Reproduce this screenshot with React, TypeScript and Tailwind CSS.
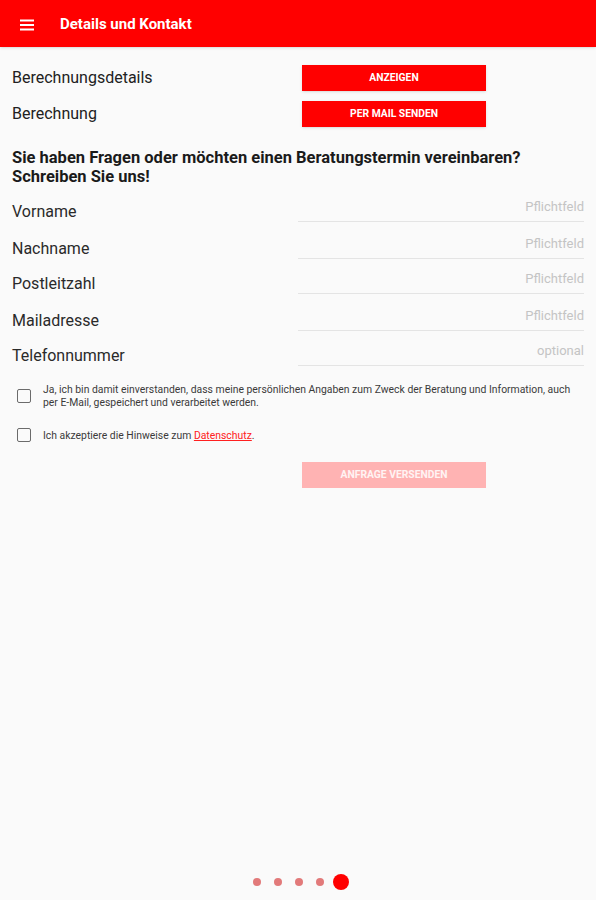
import React from 'react';

const fields = [
  { label: 'Vorname', hint: 'Pflichtfeld' },
  { label: 'Nachname', hint: 'Pflichtfeld' },
  { label: 'Postleitzahl', hint: 'Pflichtfeld' },
  { label: 'Mailadresse', hint: 'Pflichtfeld' },
  { label: 'Telefonnummer', hint: 'optional' },
];

const App: React.FC = () => {
  return (
    <div className="min-h-[900px] h-[900px] bg-[#fafafa] flex flex-col font-['Roboto',sans-serif] text-[#212121]">
      <header className="h-[47px] bg-[#ff0000] flex items-center shrink-0 pt-[2px] shadow-sm">
        <svg width="14" height="12" viewBox="0 0 14 12" className="ml-[20px]">
          <rect x="0" y="0.5" width="14" height="2" fill="#fff" />
          <rect x="0" y="5" width="14" height="2" fill="#fff" />
          <rect x="0" y="9.5" width="14" height="2" fill="#fff" />
        </svg>
        <h1 className="ml-[26px] text-white text-[15px] font-bold">Details und Kontakt</h1>
      </header>

      <main className="px-3 flex-1">
        <div className="mt-[18px] flex flex-col gap-[10px]">
          <div className="flex items-center h-[26px]">
            <span className="w-[290px] text-[16px]">Berechnungsdetails</span>
            <button className="w-[184px] h-[26px] bg-[#ff0000] text-white text-[10.3px] font-bold shadow-sm">ANZEIGEN</button>
          </div>
          <div className="flex items-center h-[26px]">
            <span className="w-[290px] text-[16px]">Berechnung</span>
            <button className="w-[184px] h-[26px] bg-[#ff0000] text-white text-[10.3px] font-bold shadow-sm">PER MAIL SENDEN</button>
          </div>
        </div>

        <h2 className="mt-[21px] text-[16.5px] leading-[19px] font-bold text-[#1a1a1a]">
          Sie haben Fragen oder möchten einen Beratungstermin vereinbaren?
          <br />
          Schreiben Sie uns!
        </h2>

        <div className="flex flex-col">
          {fields.map((f, i) => (
            <div key={f.label} className={`flex ${i === 0 ? 'h-[36px]' : i === 2 ? 'h-[35px]' : i === 3 ? 'h-[37px]' : i === 4 ? 'h-[35px]' : 'h-[37px]'}`}>
              <span className="w-[286px] self-end mb-[1px] text-[16px] leading-[19px] text-[#2a2a2a]">{f.label}</span>
              <div className="flex-1 border-b border-[#e4e4e4] flex items-end justify-end pb-[7px] text-[13px] leading-[15px] text-[#c4c4c4]">
                {f.hint}
              </div>
            </div>
          ))}
        </div>

        <div className="mt-[17px] flex items-center pl-[5px]">
          <span className="w-[14px] h-[14px] border-[1.5px] border-[#6b6b6b] rounded-[2px] shrink-0" />
          <p className="ml-[12px] text-[10.4px] leading-[13px] text-[#3a3a3a]">
            Ja, ich bin damit einverstanden, dass meine persönlichen Angaben zum Zweck der Beratung und Information, auch
            <br />
            per E-Mail, gespeichert und verarbeitet werden.
          </p>
        </div>
        <div className="mt-[19px] flex items-center pl-[5px]">
          <span className="w-[14px] h-[14px] border-[1.5px] border-[#6b6b6b] rounded-[2px] shrink-0" />
          <p className="ml-[12px] text-[10.4px] leading-[13px] text-[#3a3a3a]">
            Ich akzeptiere die Hinweise zum <span className="text-[#ff2020] underline">Datenschutz</span>.
          </p>
        </div>

        <div className="mt-[20px] flex pl-[290px]">
          <button className="w-[184px] h-[26px] bg-[#ffb3b3] text-[#fff3f3] text-[10.3px] font-bold">ANFRAGE VERSENDEN</button>
        </div>
      </main>

      <footer className="h-[36px] flex items-center justify-center gap-[13px] shrink-0 pb-[1px] pl-[5px]">
        <span className="w-[8px] h-[8px] rounded-full bg-[#e27a7a]" />
        <span className="w-[8px] h-[8px] rounded-full bg-[#e27a7a]" />
        <span className="w-[8px] h-[8px] rounded-full bg-[#e27a7a]" />
        <span className="w-[8px] h-[8px] rounded-full bg-[#e27a7a]" />
        <span className="w-[16px] h-[16px] rounded-full bg-[#ff0000] -ml-[4px]" />
      </footer>
    </div>
  );
};

export default App;
